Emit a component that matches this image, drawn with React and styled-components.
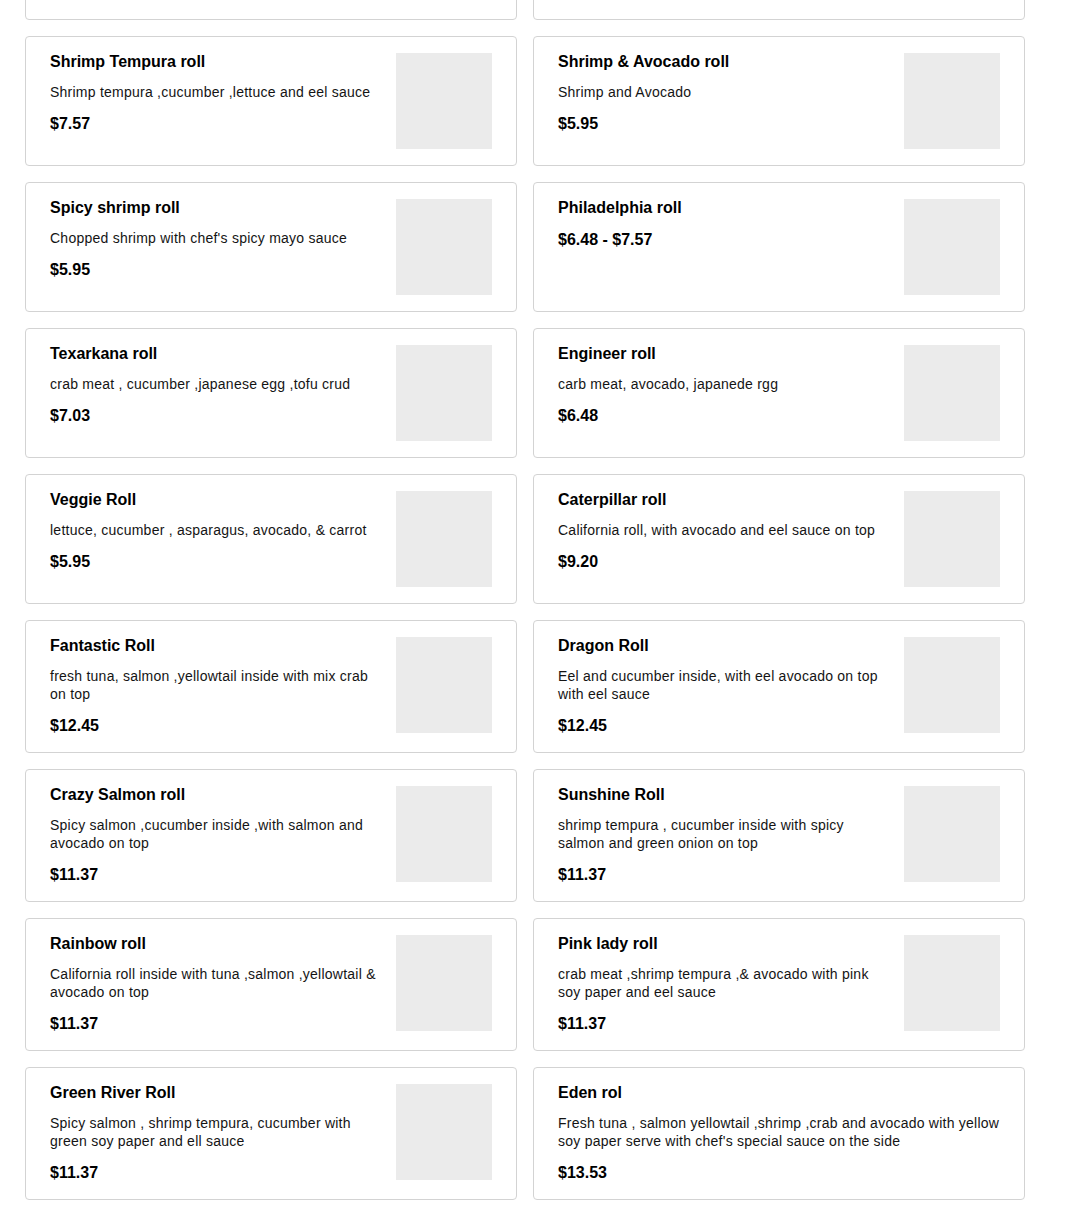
import React from 'react';
import styled, { createGlobalStyle } from 'styled-components';

const GlobalStyle = createGlobalStyle`
    html, body {
        margin: 0;
        padding: 0;
        background: #ffffff;
        font-family: "Liberation Sans", Arial, sans-serif;
        color: #000000;
        overflow: hidden;
    }
`

const Page = styled.div`
    padding: 0 25px;
    height: 1208px;
    overflow: hidden;
`

const Grid = styled.ul`
    display: grid;
    grid-template-columns: 492px 492px;
    gap: 16px;
    list-style-type: none;
    margin: -110px 0 0 0;
    padding: 0;
`

const Card = styled.li`
    display: flex;
    flex-direction: row;
    align-items: flex-start;
    gap: 16px;
    box-sizing: border-box;
    min-height: 130px;
    padding: 16px 24px;
    border: 1px solid #d3d3d3;
    border-radius: 4px;
    background: #fff;
`

const Info = styled.div`
    flex: 1;
    min-width: 0;
    display: flex;
    flex-direction: column;
`

const Name = styled.span`
    display: block;
    font-size: 16px;
    line-height: 18px;
    font-weight: 700;
    color: #000;
`

const Description = styled.p`
    margin: 12px 0 0 0;
    font-size: 14px;
    line-height: 18px;
    letter-spacing: 0.24px;
    color: #141414;
`

const Price = styled.span`
    display: block;
    margin-top: 13px;
    font-size: 16px;
    line-height: 20px;
    font-weight: 700;
    color: #000;
`

const Thumb = styled.div`
    flex: none;
    width: 96px;
    height: 96px;
    background: #ebebeb;
`

// the row above is scrolled out of view, only its bottom edge shows
const hidden = [{ id: 'a' }, { id: 'b' }];

const rolls = [
    { id: 1, name: 'Shrimp Tempura roll', desc: 'Shrimp tempura ,cucumber ,lettuce and eel sauce', price: '$7.57', image: true },
    { id: 2, name: 'Shrimp & Avocado roll', desc: 'Shrimp and Avocado', price: '$5.95', image: true },
    { id: 3, name: 'Spicy shrimp roll', desc: "Chopped shrimp with chef's spicy mayo sauce", price: '$5.95', image: true },
    { id: 4, name: 'Philadelphia roll', desc: null, price: '$6.48 - $7.57', image: true },
    { id: 5, name: 'Texarkana roll', desc: 'crab meat , cucumber ,japanese egg ,tofu crud', price: '$7.03', image: true },
    { id: 6, name: 'Engineer roll', desc: 'carb meat, avocado, japanede rgg', price: '$6.48', image: true },
    { id: 7, name: 'Veggie Roll', desc: 'lettuce, cucumber , asparagus, avocado, & carrot', price: '$5.95', image: true },
    { id: 8, name: 'Caterpillar roll', desc: 'California roll, with avocado and eel sauce on top', price: '$9.20', image: true },
    { id: 9, name: 'Fantastic Roll', desc: 'fresh tuna, salmon ,yellowtail inside with mix crab on top', price: '$12.45', image: true },
    { id: 10, name: 'Dragon Roll', desc: 'Eel and cucumber inside, with eel avocado on top with eel sauce', price: '$12.45', image: true },
    { id: 11, name: 'Crazy Salmon roll', desc: 'Spicy salmon ,cucumber inside ,with salmon and avocado on top', price: '$11.37', image: true },
    { id: 12, name: 'Sunshine Roll', desc: 'shrimp tempura , cucumber inside with spicy salmon and green onion on top', price: '$11.37', image: true },
    { id: 13, name: 'Rainbow roll', desc: 'California roll inside with tuna ,salmon ,yellowtail & avocado on top', price: '$11.37', image: true },
    { id: 14, name: 'Pink lady roll', desc: 'crab meat ,shrimp tempura ,& avocado with pink soy paper and eel sauce', price: '$11.37', image: true },
    { id: 15, name: 'Green River Roll', desc: 'Spicy salmon , shrimp tempura, cucumber with green soy paper and ell sauce', price: '$11.37', image: true },
    { id: 16, name: 'Eden rol', desc: "Fresh tuna , salmon yellowtail ,shrimp ,crab and avocado with yellow soy paper serve with chef's special sauce on the side", price: '$13.53', image: false },
];

function App() {
    return (
        <Page>
            <GlobalStyle />
            <Grid>
                {hidden.map(cur => <Card key={cur.id} />)}
                {rolls.map(cur => (
                    <Card key={cur.id}>
                        <Info>
                            <Name>{cur.name}</Name>
                            {cur.desc && <Description>{cur.desc}</Description>}
                            <Price>{cur.price}</Price>
                        </Info>
                        {cur.image && <Thumb />}
                    </Card>
                ))}
            </Grid>
        </Page>
    );
}

export default App;
